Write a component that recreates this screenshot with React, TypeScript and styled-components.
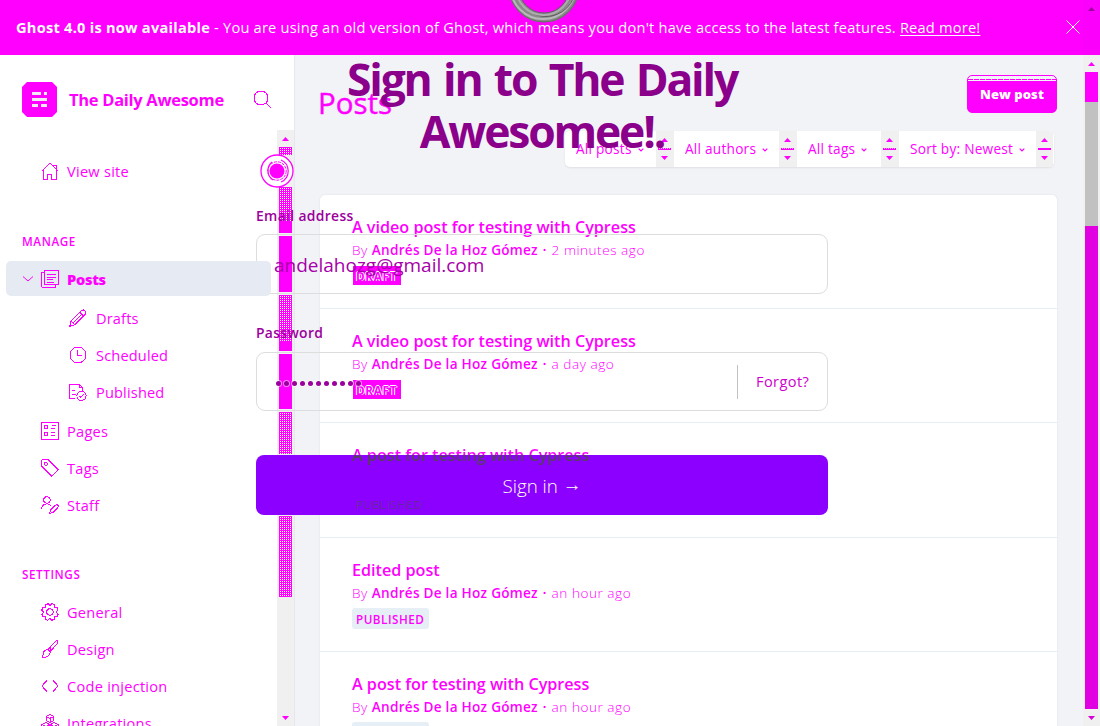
import React from 'react';
import styled, { createGlobalStyle, css } from 'styled-components';

const MAGENTA = '#ff00ff';
const TRACK = '#f0f0f0';

const GlobalStyle = createGlobalStyle`
  * { box-sizing: border-box; }
  body {
    margin: 0;
    overflow: hidden;
    background: #fff;
    color: ${MAGENTA};
    font-family: 'Open Sans', 'Noto Sans', sans-serif;
    font-size: 15px;
  }
`;

const Page = styled.div`
  position: relative;
  display: flex;
  flex-direction: column;
  width: 1100px;
  height: 726px;
  overflow: hidden;
`;

/* ---------- Banner ---------- */

const Banner = styled.header`
  display: flex;
  align-items: center;
  flex: 0 0 55px;
  background: ${MAGENTA};
  color: #fff;
  padding-left: 16px;
`;

const BannerText = styled.p`
  flex: 1;
  margin: 0;
  padding-bottom: 2px;
  font-size: 14.6px;
  line-height: 20px;
  letter-spacing: 0.22px;
  white-space: nowrap;
  a { color: inherit; text-underline-offset: 2px; }
  strong { letter-spacing: 0.25px; }
`;

const BannerClose = styled.svg`
  margin: 0 3px 1px 0;
  stroke: #fff;
`;

const BannerEdge = styled.div`
  align-self: stretch;
  width: 17px;
  padding-top: 7px;
  background: #fb00fb;
  display: flex;
  justify-content: center;
  align-items: flex-start;
`;

const Body = styled.div`
  display: flex;
  flex: 1;
  min-height: 0;
`;

/* ---------- Sidebar ---------- */

const Sidebar = styled.aside`
  display: flex;
  flex-direction: column;
  flex: 0 0 295px;
  border-right: 1px solid #e4e7ee;
  background: #fff;
`;

const SiteHeader = styled.div`
  display: flex;
  align-items: center;
  flex: 0 0 75px;
  padding: 14px 22px 0 22px;
`;

const SiteName = styled.span`
  flex: 1;
  margin-left: 12px;
  font-size: 16.5px;
  font-weight: 700;
  letter-spacing: -0.3px;
  white-space: nowrap;
`;

const SidebarScroll = styled.div`
  display: flex;
  flex: 1;
  min-height: 0;
`;

const Nav = styled.nav`
  flex: 1;
  min-width: 0;
  padding: 23px 6px 0;
  overflow: hidden;
`;

const NavItem = styled.a<{ $active?: boolean; $sub?: boolean; $last?: boolean }>`
  display: flex;
  align-items: center;
  height: 35px;
  width: 265px;
  margin-bottom: ${p => (p.$last ? 4 : 2)}px;
  padding-left: ${p => (p.$active ? 16 : p.$sub ? 63 : 35)}px;
  border-radius: 5px;
  font-size: 14.6px;
  letter-spacing: ${p => (p.$sub ? 0.15 : 0.25)}px;
  white-space: nowrap;
  svg + span { margin-left: ${p => (p.$sub ? 9 : 8)}px; }
  ${p =>
    p.$active &&
    css`
      position: relative;
      z-index: 3;
      background: #e6eaf2;
      font-weight: 800;
      letter-spacing: -0.3px;
      margin-bottom: 4px;
    `}
`;

const NavHeading = styled.h4<{ $top: number; $bottom: number }>`
  margin: ${p => p.$top}px 0 ${p => p.$bottom}px 16px;
  height: 16px;
  line-height: 16px;
  font-size: 11.7px;
  font-weight: 600;
  letter-spacing: 0.58px;
`;

const Chevron = styled.svg`
  margin-right: 7px;
`;

/* ---------- Scrollbars ---------- */

const ScrollTrack = styled.div`
  display: flex;
  flex-direction: column;
  align-items: center;
  justify-content: flex-start;
  flex: 0 0 17px;
  background: ${TRACK};
`;

const ScrollButton = styled.div`
  display: flex;
  align-items: center;
  justify-content: center;
  flex: 0 0 17px;
`;

const ThumbPart = styled.div<{ $h: number; $color?: string; $dots?: boolean; $gap?: number }>`
  flex: 0 0 ${p => p.$h}px;
  width: 13px;
  margin-bottom: ${p => p.$gap || 0}px;
  background: ${p => p.$color || MAGENTA};
  ${p =>
    p.$dots &&
    css`
      background: linear-gradient(90deg, ${MAGENTA} 50%, transparent 50%),
        linear-gradient(${MAGENTA} 50%, #fff 50%);
      background-size: 2px 2px;
    `}
`;

const Spacer = styled.div`
  flex: 1;
`;

/* ---------- Main ---------- */

const Main = styled.main`
  flex: 1;
  min-width: 0;
  padding: 20px 26px 0 25px;
  background: #f2f3f7;
  overflow: hidden;
`;

const TitleBar = styled.div`
  display: flex;
  justify-content: space-between;
  align-items: flex-start;
  height: 56px;
`;

const PageTitle = styled.h2`
  margin: 7px 0 0 -2px;
  font-size: 29.5px;
  line-height: 42px;
  font-weight: 500;
  letter-spacing: 0;
  -webkit-text-stroke: 0.4px ${MAGENTA};
`;

const NewPost = styled.button`
  width: 90px;
  height: 38px;
  padding: 0 0 1px;
  border: 1px solid ${MAGENTA};
  border-radius: 5px;
  background: repeating-linear-gradient(90deg, ${MAGENTA} 0 5px, #f2f3f8 5px 6px) 0 3px / 100% 1px no-repeat,
    linear-gradient(#f2f3f8 5px, ${MAGENTA} 5px);
  color: #fff;
  font: 800 13px 'Open Sans', sans-serif;
  letter-spacing: 0.05px;
`;

const Filters = styled.div`
  display: flex;
  width: 489px;
  height: 36px;
  margin: 0 3px 28px auto;
  border-radius: 5px;
  background: #fff;
  box-shadow: 0 1px 2px rgba(0, 0, 0, 0.08);
  overflow: hidden;
`;

const Filter = styled.div<{ $w: number }>`
  display: flex;
  align-items: center;
  flex: 0 0 ${p => p.$w}px;
  padding: 0 0 1px 11px;
  font-size: 13.7px;
  letter-spacing: 0.22px;
  white-space: nowrap;
  svg { margin: 3px 0 0 6px; }
`;

const Stepper = styled.div<{ $w: number }>`
  display: flex;
  flex-direction: column;
  align-items: center;
  flex: 0 0 ${p => p.$w}px;
  padding: 7px ${p => p.$w - 17}px 0 0;
  gap: 6px;
  background: ${TRACK};
`;

const StepperLine = styled.div<{ $solid?: boolean }>`
  width: 13px;
  height: 2px;
  background: ${p =>
    p.$solid ? MAGENTA : `repeating-linear-gradient(90deg, ${MAGENTA} 0 1px, #ffb8ff 1px 2px) 0 0 / 100% 1px no-repeat, ${MAGENTA}`};
`;

const PostList = styled.section`
  width: 737px;
  height: 560px;
  border-radius: 5px 5px 0 0;
  background: #fff;
  box-shadow: 0 0 2px rgba(0, 0, 0, 0.1);
`;

const PostRow = styled.article`
  height: 114.2px;
  padding: 21px 0 0 32px;
  border-bottom: 1px solid #e5eff5;
`;

const PostTitle = styled.h3<{ $split?: boolean }>`
  width: max-content;
  margin: 0;
  font-size: 16.2px;
  line-height: 22px;
  font-weight: 600;
  letter-spacing: -0.02px;
  white-space: nowrap;
  ${p =>
    p.$split &&
    css`
      position: relative;
      z-index: 3;
      color: transparent;
      background: linear-gradient(${MAGENTA} 11px, #56405c 11px);
      background-clip: text;
    `}
`;

const PostMeta = styled.p`
  margin: 1px 0 6px;
  font-size: 13.6px;
  line-height: 22px;
  font-weight: 300;
  letter-spacing: 0.52px;
  white-space: nowrap;
  strong { font-weight: 600; letter-spacing: 0.25px; }
`;

const Badge = styled.span<{ $kind: 'draft' | 'published' | 'ghosted' }>`
  display: block;
  width: max-content;
  font-size: 11.7px;
  font-weight: 600;
  letter-spacing: 0.5px;
  ${p =>
    p.$kind === 'draft' &&
    css`
      width: 48px;
      height: 19px;
      margin: -1px 0 0 1px;
      line-height: 21px;
      padding-left: 3px;
      background: ${MAGENTA};
      color: ${MAGENTA};
      font-weight: 700;
      letter-spacing: 0.7px;
      text-shadow: -1px 0 #fff, 1px 0 #fff, 0 -1px #fff;
    `}
  ${p =>
    p.$kind === 'published' &&
    css`
      width: 77px;
      height: 21px;
      line-height: 22px;
      margin-top: -2px;
      padding-left: 4px;
      border-radius: 3px;
      background: #e5eff5;
    `}
  ${p =>
    p.$kind === 'ghosted' &&
    css`
      position: relative;
      z-index: 3;
      height: 21px;
      line-height: 23px;
      margin-top: -2px;
      padding-left: 4px;
      color: #50406a;
      font-weight: 300;
      letter-spacing: 0.6px;
    `}
`;

/* ---------- Sign-in overlay ---------- */

const SignIn = styled.form`
  position: absolute;
  z-index: 2;
  top: 0;
  left: 256px;
  width: 572px;
  display: flex;
  flex-direction: column;
`;

const Emblem = styled.svg`
  align-self: center;
  margin-left: 3px;
`;

const SignInTitle = styled.h1`
  margin: 30px 0 49px;
  color: #8b008b;
  font-size: 44.5px;
  line-height: 52px;
  font-weight: 700;
  letter-spacing: -2.2px;
  word-spacing: 3px;
  text-align: center;
  white-space: nowrap;
`;

const Label = styled.label<{ $gap: number }>`
  height: 20px;
  margin-bottom: ${p => p.$gap}px;
  color: #9c009c;
  font-size: 13.9px;
  line-height: 20px;
  font-weight: 600;
  letter-spacing: 0.33px;
`;

const Field = styled.div<{ $h: number }>`
  display: flex;
  align-items: center;
  height: ${p => p.$h}px;
  margin-bottom: 29px;
  padding-left: 17px;
  border: 1px solid #dddddd;
  border-radius: 9px;
`;

const FieldValue = styled.span`
  padding-top: 1px;
  color: #a600a8;
  font-size: 19px;
`;

const Dots = styled.span`
  display: flex;
  flex: 1;
  gap: 3px;
  padding: 3px 0 0 2px;
`;

const Dot = styled.i`
  width: 5px;
  height: 5px;
  border-radius: 50%;
  background: #9c009c;
  box-shadow: 0 0 0 1px rgba(255, 255, 255, 0.5);
`;

const Forgot = styled.span`
  width: 90px;
  height: 34px;
  padding-left: 18px;
  border-left: 1px solid #c2c2c2;
  color: #cf00cf;
  font-size: 14.6px;
  line-height: 33px;
  letter-spacing: 0.4px;
`;

const Submit = styled.button`
  height: 60px;
  margin-top: 15px;
  padding: 2px 0 0;
  border: 0;
  border-radius: 8px;
  background: #8c00ff;
  color: #fff;
  font: 300 18.8px 'Open Sans', sans-serif;
`;

const Arrow = styled.span`
  display: inline-block;
  transform: translateY(-2px);
`;

const Pulse = styled.svg`
  position: absolute;
  z-index: 4;
  left: 260px;
  top: 154px;
`;

/* ---------- Drawings ---------- */

const Icon = ({ children, size = 18 }: { children: React.ReactNode; size?: number }) => (
  <svg
    width={size}
    height={size}
    viewBox={`0 0 ${size} ${size}`}
    fill="none"
    stroke={MAGENTA}
    strokeWidth={1}
    strokeLinejoin="round"
    shapeRendering="crispEdges"
  >
    {children}
  </svg>
);

const Caret = ({ down, color = MAGENTA }: { down?: boolean; color?: string }) => (
  <svg width="7" height="4" viewBox="0 0 7 4" fill={color}>
    <path d={down ? 'M0 0h7L3.5 4z' : 'M0 4h7L3.5 0z'} />
  </svg>
);

const SmallChevron = () => (
  <svg width="6" height="4" viewBox="0 0 6 4" fill="none" stroke={MAGENTA} strokeWidth="1.2">
    <path d="M.7.6 3 3 5.3.6" />
  </svg>
);

const icons = {
  home: <path d="M.7 9.5 9 1.2l8.3 8.3M2.500 8v9.5h4v-5.200h4v5.200h4.500V8M12 3.2h3v3.5" />,
  posts: (
    <>
      <path d="M3.5.5h14v14h-14zM3.500 2.500H.5v14.500h14v-2.500" />
      <path d="M6 4.500h9M6 7.500h9M6 9.500h6M6 12.500h7" />
    </>
  ),
  pencil: <path d="m.8 17.200 1.300-5L12.500 1.800c1-1 2.600-1 3.600 0s1 2.600 0 3.600L5.800 15.800zM2.200 12.300l3.500 3.500M11 3.500l3.600 3.500M4 14 13 5" />,
  clock: (
    <>
      <circle cx="9" cy="9" r="8" />
      <path d="M8.500 4v5.500H13" />
    </>
  ),
  published: (
    <>
      <path d="M6 15.500H.7V1h9.500l3.300 3.300v3.200M10 1v3.500h3.500M3 11.500h4M3 7.500h3" />
      <circle cx="12.500" cy="12.800" r="4.600" />
      <path d="m10.200 12.800 1.600 1.700 3-3.200" />
    </>
  ),
  pages: (
    <>
      <rect x=".5" y=".5" width="17" height="17" rx="1" />
      <path d="M3.500 3.500h3v3h-3zM3.500 10.500h3v3h-3zM9.500 6.500h4M10.500 3.500h4M9.500 10.500h4.500M9.500 13.500h4.500" />
    </>
  ),
  tag: (
    <>
      <path d="M.6 1.500V7l10.200 10.200 6.500-6.500L7.500.9h-6z" />
      <path d="M3.500 3.500h2.500v2.500h-2.500z" />
    </>
  ),
  staff: (
    <>
      <circle cx="6" cy="4" r="3.200" />
      <path d="M.6 13.500C.8 10 3 7.800 6 7.800c1.700 0 3 .7 4 1.700M8.700 17.200l.6-3 5.200-5c1.700-1.200 3.600.6 2.500 2.200l-5.300 5.200z" />
    </>
  ),
  gear: (
    <>
      <circle cx="9" cy="9" r="3.200" />
      <path d="M9 2.700 11 .700l2.300 1 .1 2.900 2.800.2 1 2.300L15.300 9l1.900 2-1 2.300-2.800.1-.2 2.900-2.300 1L9 15.300l-2 2-2.300-1-.1-2.900-2.800-.1-1-2.300L2.700 9 .8 7.100l1-2.300 2.800-.2.2-2.900 2.300-1z" />
    </>
  ),
  brush: <path d="M7 9.500 14.800 1.200c1.300-1.100 2.900.4 2 1.800L9 11.800M7 9.500l2.200 2.300c.2 3-3.200 6-8 5.500 1.200-1.300.4-4.700 2-6.200 1.200-1.300 2.600-1.400 3.800-1.600zM8.500 8l2.200 2" />,
  code: <path d="M6 3.500.8 9 6 14.500M12 3.500 17.200 9 12 14.500" />,
  blocks: (
    <path d="M9 .7 12.700 2.500v4L9 8.300 5.300 6.500v-4zM5.300 2.500 9 4.300l3.700-1.800M9 4.300v4M4.700 8.500l3.800 2v4.300l-3.800 2-4-2v-4.300zM.7 10.500l4 2 3.800-2M4.700 12.500v4.300M13.300 8.500l4 2v4.300l-4 2-3.800-2v-4.300zM9.500 10.500l3.800 2 4-2M13.300 12.500v4.300" />
  ),
};

const SiteLogo = () => (
  <svg width="35" height="35" viewBox="0 0 35 35">
    <path d="M5 0h25l5 5v25l-5 5H5l-5-5V5z" fill={MAGENTA} />
    <path
      d="M10 10h9v3h-9zM22 10h3v3h-3zM10 16h15v3H10zM10 22h6v3h-6zM19 22h6v3h-6z"
      fill="#f4e8f4"
    />
  </svg>
);

const posts = [
  { title: 'A video post for testing with Cypress', when: '2 minutes ago', kind: 'draft' },
  { title: 'A video post for testing with Cypress', when: 'a day ago', kind: 'draft' },
  { title: 'A post for testing with Cypress', when: 'an hour ago', kind: 'ghosted' },
  { title: 'Edited post', when: 'an hour ago', kind: 'published' },
  { title: 'A post for testing with Cypress', when: 'an hour ago', kind: 'published' },
] as const;

const filters = [
  { label: 'All posts', w: 91, step: 18 },
  { label: 'All authors', w: 105, step: 18 },
  { label: 'All tags', w: 84, step: 18 },
  { label: 'Sort by: Newest', w: 137, step: 17 },
];

interface ItemProps {
  icon: keyof typeof icons;
  children: string;
  sub?: boolean;
  last?: boolean;
}

const Item = ({ icon, children, sub, last }: ItemProps) => (
  <NavItem $sub={sub} $last={last}>
    <Icon>{icons[icon]}</Icon>
    <span>{children}</span>
  </NavItem>
);

export default function App() {
  return (
    <Page>
      <GlobalStyle />
      <Banner>
        <BannerText>
          <strong>Ghost 4.0 is now available</strong> - You are using an old version of Ghost, which means you don't
          have access to the latest features. <a href="#more">Read more!</a>
        </BannerText>
        <BannerClose width="14" height="14" viewBox="0 0 14 14">
          <path d="m.5.5 13 13M13.500.5l-13 13" />
        </BannerClose>
        <BannerEdge>
          <Caret color="#a000a0" />
        </BannerEdge>
      </Banner>

      <Body>
        <Sidebar>
          <SiteHeader>
            <SiteLogo />
            <SiteName>The Daily Awesome</SiteName>
            <Icon size={19}>
              <circle cx="8" cy="8" r="7" />
              <path d="m13 13 5.500 5.500" />
            </Icon>
          </SiteHeader>
          <SidebarScroll>
            <Nav>
              <Item icon="home">View site</Item>
              <NavHeading $top={45} $bottom={12}>MANAGE</NavHeading>
              <NavItem $active>
                <Chevron width="12" height="6" viewBox="0 0 12 6" fill="none" stroke={MAGENTA}>
                  <path d="m1 .5 5 4.500 5-4.500" />
                </Chevron>
                <Icon>{icons.posts}</Icon>
                <span>Posts</span>
              </NavItem>
              <Item icon="pencil" sub>Drafts</Item>
              <Item icon="clock" sub>Scheduled</Item>
              <Item icon="published" sub last>Published</Item>
              <Item icon="pages">Pages</Item>
              <Item icon="tag">Tags</Item>
              <Item icon="staff">Staff</Item>
              <NavHeading $top={44} $bottom={12}>SETTINGS</NavHeading>
              <Item icon="gear">General</Item>
              <Item icon="brush">Design</Item>
              <Item icon="code">Code injection</Item>
              <Item icon="blocks">Integrations</Item>
            </Nav>
            <ScrollTrack>
              <ScrollButton><Caret /></ScrollButton>
              <ThumbPart $h={8} $dots />
              <ThumbPart $h={32} $color="transparent" />
              <ThumbPart $h={35} $dots />
              <ThumbPart $h={11} $gap={3} />
              <ThumbPart $h={56} $gap={3} />
              <ThumbPart $h={47} $dots />
              <ThumbPart $h={9} $gap={3} />
              <ThumbPart $h={55} $gap={3} />
              <ThumbPart $h={42} $dots />
              <ThumbPart $h={62} $color="transparent" />
              <ThumbPart $h={81} $dots />
              <Spacer />
              <ScrollButton><Caret down /></ScrollButton>
            </ScrollTrack>
          </SidebarScroll>
        </Sidebar>

        <Main>
          <TitleBar>
            <PageTitle>Posts</PageTitle>
            <NewPost>New post</NewPost>
          </TitleBar>
          <Filters>
            {filters.map((f, i) => (
              <React.Fragment key={f.label}>
                <Filter $w={f.w}>
                  {f.label}
                  <SmallChevron />
                </Filter>
                <Stepper $w={f.step}>
                  <Caret />
                  <StepperLine $solid={i === 3} />
                  <Caret down />
                </Stepper>
              </React.Fragment>
            ))}
          </Filters>
          <PostList>
            {posts.map((p, i) => (
              <PostRow key={i}>
                <PostTitle $split={p.kind === 'ghosted'}>{p.title}</PostTitle>
                <PostMeta>
                  By <strong>Andrés De la Hoz Gómez</strong> • {p.when}
                </PostMeta>
                <Badge $kind={p.kind}>{p.kind === 'draft' ? 'DRAFT' : 'PUBLISHED'}</Badge>
              </PostRow>
            ))}
          </PostList>
        </Main>

        <ScrollTrack>
          <ScrollButton><Caret /></ScrollButton>
          <ThumbPart $h={30} />
          <ThumbPart $h={124} $color="#c1c1c1" />
          <ThumbPart $h={483} $color="#e100e1" />
          <ScrollButton><Caret down color="#d800d8" /></ScrollButton>
        </ScrollTrack>
      </Body>

      <SignIn>
        <Emblem width="68" height="23" viewBox="0 0 68 23" fill="none">
          <circle cx="34" cy="-13" r="30.500" stroke="#8a8a8a" strokeWidth="9.500" />
          <circle cx="34" cy="-13" r="34.800" stroke="#6c6c6c" strokeWidth="1.200" />
          <circle cx="33" cy="-13.500" r="32.500" stroke="#b9b9b9" strokeWidth="2" />
          <circle cx="36" cy="-13" r="29.500" stroke="#5c5c5c" strokeWidth="1" />
          <circle cx="33.500" cy="-12.500" r="27.500" stroke="#adadad" strokeWidth="2" />
          <circle cx="34" cy="-12" r="25" stroke="#6a5a6c" strokeWidth="1" />
        </Emblem>
        <SignInTitle>
          Sign in to The Daily
          <br />
          Awesomee!.
        </SignInTitle>
        <Label $gap={8}>Email address</Label>
        <Field $h={60}>
          <FieldValue>andelahozg@gmail.com</FieldValue>
        </Field>
        <Label $gap={9}>Password</Label>
        <Field $h={59}>
          <Dots>
            {Array.from({ length: 11 }, (_, i) => (
              <Dot key={i} />
            ))}
          </Dots>
          <Forgot>Forgot?</Forgot>
        </Field>
        <Submit type="button">
          Sign in <Arrow>→</Arrow>
        </Submit>
      </SignIn>

      <Pulse width="34" height="34" viewBox="0 0 34 34" fill="none" stroke={MAGENTA}>
        <circle cx="17" cy="17" r="16" fill="#fff" strokeWidth="1.300" />
        <path d="M21 6a12 12 0 0 1 0 22M12 8a11 11 0 0 0-4 9c0 4 2 7 5 9" strokeWidth="1.200" />
        <circle cx="17" cy="17" r="9.200" strokeDasharray="3 1" />
        <circle cx="17" cy="17" r="7.500" fill={MAGENTA} stroke="none" />
      </Pulse>
    </Page>
  );
}
